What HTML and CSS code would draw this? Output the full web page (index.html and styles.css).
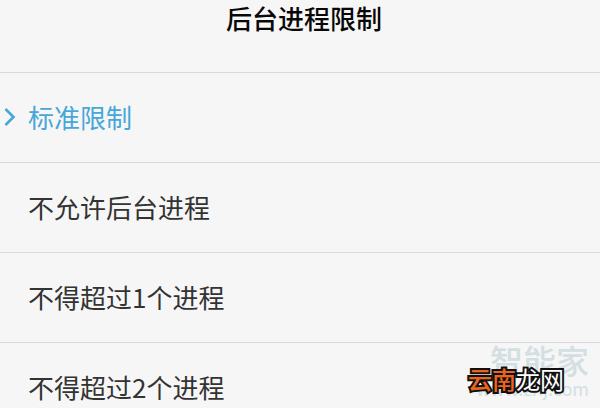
FILE: index.html
```html
<!DOCTYPE html>
<html lang="zh-CN">
<head>
<meta charset="utf-8">
<title>后台进程限制</title>
<link rel="stylesheet" href="styles.css">
</head>
<body>
<main class="sheet">
  <h1 class="title">后台进程限制</h1>
  <ul class="options">
    <li class="item"><button class="option selected" type="button">
      <svg class="chevron" viewBox="0 0 12 20" aria-hidden="true"><path d="M1.5 2 L9.5 10 L1.5 18"/></svg>标准限制</button></li>
    <li class="item"><button class="option" type="button">不允许后台进程</button></li>
    <li class="item"><button class="option" type="button">不得超过1个进程</button></li>
    <li class="item"><button class="option" type="button">不得超过2个进程</button></li>
  </ul>
  <div class="watermark">
    <span class="mark-name">智能家</span>
    <span class="mark-site">www.znj.com</span>
  </div>
  <div class="brand"><span class="brand-accent">云南</span>龙网</div>
</main>
</body>
</html>
```
FILE: styles.css
```css
* {
  box-sizing: border-box;
}

body {
  margin: 0;
  background: #f6f6f6;
  color: #333;
  font-family: "Noto Sans CJK SC", sans-serif;
}

.sheet {
  position: relative;
  height: 100vh;
  overflow: hidden;
}

.title {
  margin: 0;
  height: 72px;
  padding-left: 8px;
  color: #080808;
  font-size: 26px;
  font-weight: 500;
  line-height: 36px;
  text-align: center;
}

.options {
  margin: 0;
  padding: 0;
  list-style: none;
}

.item {
  border-top: 1px solid #d9d9d9;
}

.option {
  position: relative;
  display: block;
  width: 100%;
  padding: 24px 28px 25px;
  border: 0;
  background: none;
  color: inherit;
  font: inherit;
  font-size: 26px;
  line-height: 40px;
  text-align: left;
}

.selected {
  color: #46a7d9;
}

.chevron {
  position: absolute;
  left: 4px;
  top: 34px;
  width: 12px;
  height: 20px;
  fill: none;
  stroke: currentColor;
  stroke-width: 2.6;
}

.watermark {
  position: absolute;
  right: 11px;
  bottom: 10px;
  display: flex;
  flex-direction: column;
  align-items: flex-end;
  color: #d3dfe2;
}

.mark-name {
  font-size: 33px;
  font-weight: 500;
  line-height: 36px;
}

.mark-site {
  font-size: 18px;
  line-height: 20px;
}

.brand {
  position: absolute;
  right: 36px;
  bottom: 14px;
  color: #fff;
  font-size: 24px;
  line-height: 30px;
  -webkit-text-stroke: 4px #111;
  paint-order: stroke fill;
}

.brand-accent {
  color: #ea641c;
  font-weight: 500;
}
```
